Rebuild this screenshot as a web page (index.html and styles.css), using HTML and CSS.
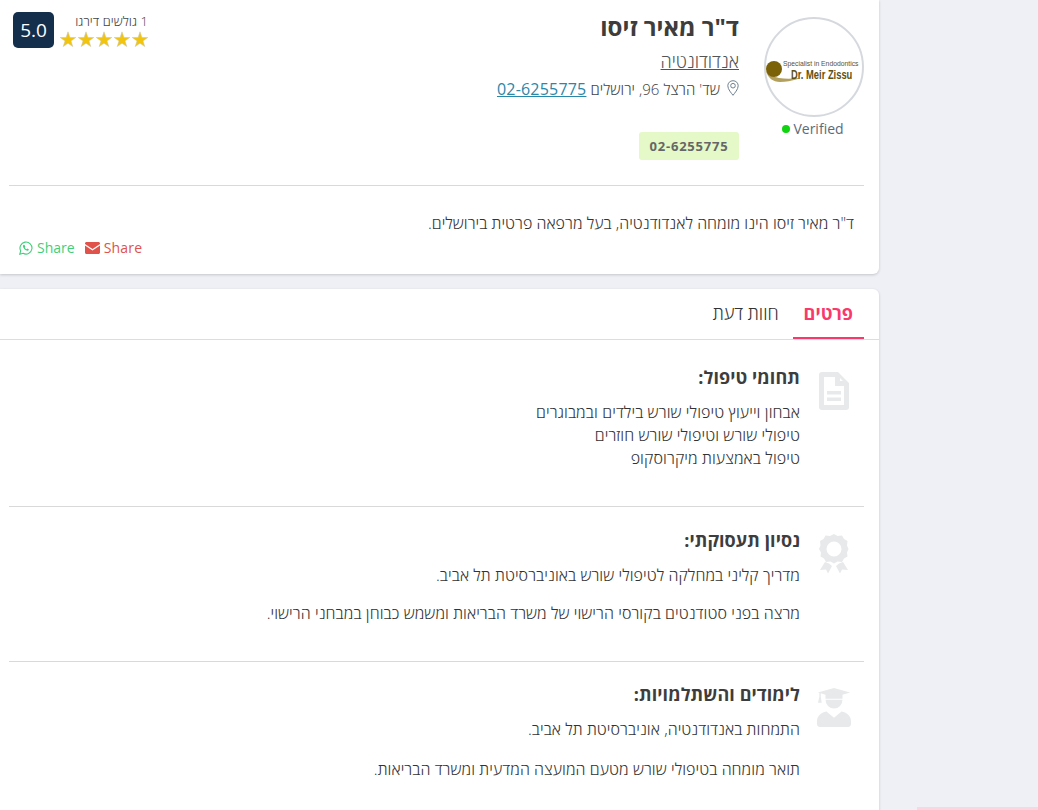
FILE: index.html
```html
<!DOCTYPE html>
<html lang="he" dir="rtl">
<head>
<meta charset="utf-8">
<title>ד"ר מאיר זיסו</title>
<link rel="stylesheet" href="styles.css">
</head>
<body>
<div class="page">
  <main class="main">
    <section class="card profile">
      <div class="head">
        <div class="avatar-col">
          <div class="avatar">
            <svg width="96" height="96" viewBox="0 0 96 96">
              <path d="M0 52c2 7 7 11 14 11 6 0 11-1 18-3 1-.5 1-1 0-1-6 1-13 1-19 0-5-1-10-3-13-7z" fill="#b3a05c"/>
              <circle cx="8" cy="50" r="8" fill="#7b6208"/>
              <text transform="translate(17 47) scale(.85 1)" class="logo-small">Specialist in Endodontics</text>
              <text transform="translate(25 60) scale(.72 1)" class="logo-big">Dr. Meir Zissu</text>
            </svg>
          </div>
          <div class="verified"><span class="dot"></span><span dir="ltr">Verified</span></div>
        </div>
        <div class="info">
          <h1 class="name">ד"ר מאיר זיסו</h1>
          <div class="spec"><a href="#">אנדודונטיה</a></div>
          <div class="addr">
            <svg class="pin" width="12" height="16" viewBox="0 0 12 16"><path d="M6 .7C3 .7.8 3 .8 5.800c0 3.500 3.700 7.500 5.200 9.500 1.500-2 5.200-6 5.200-9.500C11.200 3 9 .7 6 .7z" fill="none" stroke="#6f8190" stroke-width="1"/><circle cx="6" cy="5.700" r="2.300" fill="none" stroke="#6f8190" stroke-width="1"/></svg>
            <span>שד' הרצל 96, ירושלים</span>
            <a class="tel" href="#" dir="ltr">02-6255775</a>
          </div>
          <div class="chip" dir="ltr">02-6255775</div>
        </div>
        <div class="rating">
          <div class="rating-text">
            <div class="voters">1 גולשים דירגו</div>
            <div class="stars">
              <svg width="18" height="17" viewBox="0 0 18 17"><polygon class="star" points="9,.8 10.9,6.4 16.800,6.500 12,10 13.800,15.600 9,12.200 4.200,15.600 6,10 1.200,6.500 7.100,6.400"/></svg>
              <svg width="18" height="17" viewBox="0 0 18 17"><polygon class="star" points="9,.8 10.9,6.4 16.800,6.500 12,10 13.800,15.600 9,12.200 4.200,15.600 6,10 1.200,6.500 7.100,6.400"/></svg>
              <svg width="18" height="17" viewBox="0 0 18 17"><polygon class="star" points="9,.8 10.9,6.4 16.800,6.500 12,10 13.800,15.600 9,12.200 4.200,15.600 6,10 1.200,6.500 7.100,6.400"/></svg>
              <svg width="18" height="17" viewBox="0 0 18 17"><polygon class="star" points="9,.8 10.9,6.4 16.800,6.500 12,10 13.800,15.600 9,12.200 4.200,15.600 6,10 1.200,6.500 7.100,6.400"/></svg>
              <svg width="18" height="17" viewBox="0 0 18 17"><polygon class="star" points="9,.8 10.9,6.4 16.800,6.500 12,10 13.800,15.600 9,12.200 4.200,15.600 6,10 1.200,6.500 7.100,6.400"/></svg>
            </div>
          </div>
          <div class="score">5.0</div>
        </div>
      </div>
      <p class="about">ד"ר מאיר זיסו הינו מומחה לאנדודנטיה, בעל מרפאה פרטית בירושלים.</p>
      <div class="shares">
        <a class="share mail" href="#">
          <svg width="15" height="12" viewBox="0 0 15 12"><path d="M0 1.500C0 .7.700 0 1.500 0h12c.8 0 1.500.7 1.500 1.500v.4L7.500 7 0 1.900z M0 3.500l7.500 5 7.500-5v7c0 .8-.7 1.500-1.500 1.500h-12C.7 12 0 11.300 0 10.500z" fill="#e0524a"/></svg>
          <span dir="ltr">Share</span>
        </a>
        <a class="share wa" href="#">
          <svg width="14" height="14" viewBox="0 0 14 14"><path d="M.8 13.200l.9-3.300A6 6 0 1 1 4.100 12.300z" fill="none" stroke="#3fcf7a" stroke-width="1.100"/><path d="M4.700 3.800c-.9.700-.9 1.900-.1 3.100.8 1.300 2 2.400 3.300 2.700 1 .2 1.800-.3 2-1.200l-1.500-.8-.7.700c-.9-.4-1.500-1-2-1.900l.6-.7-.7-1.800z" fill="#3fcf7a"/></svg>
          <span dir="ltr">Share</span>
        </a>
      </div>
    </section>

    <section class="card details">
      <nav class="tabs">
        <a class="tab active" href="#">פרטים</a>
        <a class="tab" href="#">חוות דעת</a>
      </nav>
      <div class="block">
        <svg class="block-icon" width="30" height="38" viewBox="0 0 30 38"><path fill-rule="evenodd" d="M3 0h16l11 11v24a3 3 0 0 1-3 3H3a3 3 0 0 1-3-3V3a3 3 0 0 1 3-3zM5 5v28h20V14h-9V5zM21 6v3h3z M8 19h14v3.500H8z M8 25.500h14V29H8z" fill="#e8e9eb"/></svg>
        <div class="block-body">
          <h2 class="block-title">תחומי טיפול:</h2>
          <div class="lines">
            <div>אבחון וייעוץ טיפולי שורש בילדים ובמבוגרים</div>
            <div>טיפולי שורש וטיפולי שורש חוזרים</div>
            <div>טיפול באמצעות מיקרוסקופ</div>
          </div>
        </div>
      </div>
      <div class="block">
        <svg class="block-icon award" width="30" height="40" viewBox="0 0 30 40"><path fill-rule="evenodd" d="M15 0l3.500 2 4.500-.5 2 3.500 3.500 2-.5 4.500 1.500 3.500-1.500 3.500.5 4-3.500 2-2 3.500-4.500-.5-3.500 2-3.500-2-4.500.5-2-3.500-3.500-2 .5-4L0 15l1.500-3.500L1 7l3.500-2 2-3.500 4.500.5zM15 7.500a7.500 7.500 0 1 0 0 15 7.500 7.500 0 0 0 0-15z" fill="#e8e9eb"/><path d="M6 28l4 1.500 3 2.500-4 7.500-2-4-6 .5zM24 28l-4 1.500-3 2.500 4 7.500 2-4 6 .5z" fill="#e8e9eb"/></svg>
        <div class="block-body">
          <h2 class="block-title">נסיון תעסוקתי:</h2>
          <p class="para">מדריך קליני במחלקה לטיפולי שורש באוניברסיטת תל אביב.</p>
          <p class="para">מרצה בפני סטודנטים בקורסי הרישוי של משרד הבריאות ומשמש כבוחן במבחני הרישוי.</p>
        </div>
      </div>
      <div class="block">
        <svg class="block-icon grad" width="34" height="39" viewBox="0 0 36 40" preserveAspectRatio="none"><path d="M18 0L35 4.500 27 7v4H9V7L4 5.500V9l1 6H1l1.500-6V5L1 4.500z" fill="#e8e9eb"/><path d="M9 12h18a9 9 0 1 1-18 0z" fill="#e8e9eb"/><path d="M10 24l8 6.500 8-6.500c6 1 10 5 10 10v3c0 1.700-1.300 3-3 3H3c-1.700 0-3-1.300-3-3v-3c0-5 4-9 10-10z" fill="#e8e9eb"/></svg>
        <div class="block-body">
          <h2 class="block-title">לימודים והשתלמויות:</h2>
          <p class="para">התמחות באנדודנטיה, אוניברסיטת תל אביב.</p>
          <p class="para">תואר מומחה בטיפולי שורש מטעם המועצה המדעית ומשרד הבריאות.</p>
        </div>
      </div>
    </section>
  </main>
  <aside class="side">
    <div class="side-box"></div>
  </aside>
</div>
</body>
</html>
```

FILE: styles.css
```css
* { box-sizing: border-box; }
html, body { margin: 0; height: 810px; overflow: hidden; }
body {
  background: #eef0f5;
  color: #555;
  font-family: "Open Sans", "Liberation Sans", sans-serif;
  font-size: 14px;
}
a { color: inherit; }
.page { display: flex; flex-direction: row-reverse; height: 810px; }
.main {
  width: 879px;
  display: flex;
  flex-direction: column;
  gap: 15px;
  flex: none;
}
.side { flex: 1; padding-top: 807px; display: flex; }
.side-box { width: 121px; height: 3px; background: #f8d7e0; }
.card {
  background: #fff;
  box-shadow: 0 1px 3px rgba(0, 0, 0, .18);
}
.profile {
  flex: none;
  height: 274px;
  padding: 0 15px 0 9px;
  border-radius: 0 0 6px 0;
}
.head {
  display: flex;
  height: 186px;
  border-bottom: 1px solid #d9d9d9;
  padding: 12px 0 0 4px;
  gap: 25px;
}
.avatar-col { width: 100px; flex: none; padding-top: 5px; }
.avatar {
  width: 100px;
  height: 100px;
  border: 2px solid #d5d9de;
  border-radius: 50%;
}
.logo-small { font: 8px "Liberation Sans", sans-serif; fill: #5a5236; direction: ltr; }
.logo-big { font: bold 13px "Liberation Sans", sans-serif; fill: #5f5011; direction: ltr; }
.verified {
  display: flex;
  align-items: center;
  justify-content: center;
  flex-direction: row-reverse;
  gap: 3px;
  margin-top: 2px;
  padding-right: 2px;
  font-size: 14px;
  line-height: 20px;
  color: #5b6b78;
}
.dot { width: 8px; height: 8px; border-radius: 50%; background: #0fd40f; }
.info { flex: 1; }
.name {
  margin: 0;
  font-size: 24px;
  line-height: 30px;
  font-weight: 700;
  color: #3d3d3d;
}
.spec { margin-top: 7px; font-size: 18px; line-height: 24px; font-weight: 300; color: #555; }
.addr {
  display: flex;
  align-items: center;
  gap: 6px;
  margin-top: 4px;
  font-size: 15px;
  line-height: 24px;
  font-weight: 300;
  color: #444;
}
.pin { flex: none; margin-bottom: 3px; }
.addr span { margin: 0 1px 0 -2px; letter-spacing: .05px; }
.tel { font-size: 16px; font-weight: 400; letter-spacing: .2px; color: #2a87a8; text-decoration: underline; }
.chip {
  width: 100px;
  height: 28px;
  margin-top: 31px;
  background: #e4f8c8;
  border-radius: 3px;
  font-size: 13px;
  font-weight: 700;
  line-height: 28px;
  text-align: center;
  color: #666;
  letter-spacing: .8px;
}
.rating { display: flex; gap: 6px; align-items: flex-start; }
.rating-text { width: 88px; }
.voters { font-size: 13px; line-height: 18px; font-weight: 300; letter-spacing: .05px; color: #444; }
.stars { display: flex; height: 17px; margin: 1px -1px 0; justify-content: flex-start; }
.stars svg { flex: none; }
.star { fill: #f1c40f; stroke: #c9c4ad; stroke-width: .5; }
.score {
  width: 41px;
  height: 36px;
  background: #132f4c;
  color: #fff;
  border-radius: 5px;
  font-size: 19px;
  line-height: 36px;
  text-align: center;
}
.about {
  margin: 0;
  padding: 26px 10px 0 0;
  font-size: 16px;
  font-weight: 300;
  letter-spacing: .03px;
  line-height: 22px;
  color: #333;
}
.shares {
  display: flex;
  justify-content: flex-end;
  gap: 10px;
  padding: 5px 0 0 10px;
}
.share {
  display: flex;
  align-items: center;
  flex-direction: row-reverse;
  gap: 4px;
  font-size: 14px;
  line-height: 18px;
  text-decoration: none;
}
.wa { color: #3fcf7a; }
.mail { color: #e0524a; letter-spacing: .2px; }
.details { flex: 1; min-height: 0; border-radius: 0 6px 0 0; padding: 0 15px 0 9px; }
.tabs {
  display: flex;
  height: 51px;
  margin: 0 -15px 0 -9px;
  padding: 0 15px 0 0;
  border-bottom: 1px solid #ddd;
}
.tab {
  padding: 0 14px;
  height: 50px;
  font-size: 18px;
  font-weight: 300;
  line-height: 49px;
  color: #333;
  text-decoration: none;
}
.tab.active {
  color: #f9386c;
  font-weight: 700;
  border-bottom: 2px solid #f9386c;
  padding: 0 11px;
}
.block {
  display: flex;
  gap: 19px;
  padding: 22px 15px 0 0;
  border-bottom: 1px solid #d9d9d9;
  height: 155px;
}
.tabs + .block { height: 167px; padding-top: 26px; }
.block:last-child { border-bottom: 0; height: 149px; padding-top: 21px; }
.block-icon { flex: none; margin-top: 6px; }
.award { margin-top: 5px; margin-bottom: -2px; }
.grad { margin: 5px -2px 0 -2px; }
.block-body { flex: 1; }
.block-title {
  margin: 0;
  font-size: 18px;
  letter-spacing: .08px;
  line-height: 22px;
  font-weight: 700;
  color: #3d3d3d;
}
.lines { margin-top: 13px; font-size: 16px; font-weight: 300; letter-spacing: .1px; line-height: 23px; color: #333; }
.para { margin: 13px 0 0; font-size: 16px; font-weight: 300; letter-spacing: .07px; line-height: 22px; color: #333; }
.para + .para { margin-top: 16px; }
.block:last-child .para + .para { margin-top: 18px; }
```
